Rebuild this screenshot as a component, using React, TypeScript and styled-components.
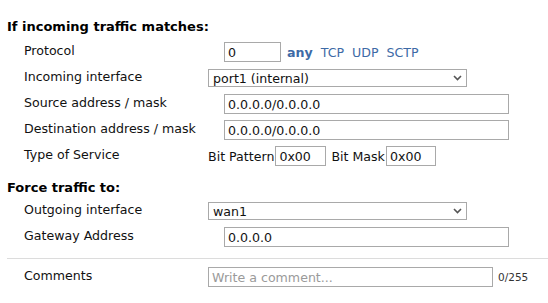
import React, { FC } from 'react';
import styled, { createGlobalStyle } from 'styled-components';

const GlobalStyle = createGlobalStyle`
	html, body {
		margin: 0;
		padding: 0;
		background: #ffffff;
	}
	body {
		font-family: 'DejaVu Sans', Verdana, sans-serif;
		font-size: 12.6px;
		color: #111111;
	}
`;

const Page = styled.div`
	width: 548px;
	height: 303px;
	overflow: hidden;
	padding-left: 7px;
	box-sizing: border-box;
`;

const SectionTitle = styled.div<{ $top: number; $bottom: number }>`
	margin-top: ${({ $top }) => $top}px;
	margin-bottom: ${({ $bottom }) => $bottom}px;
	font-weight: bold;
	font-size: 13px;
	line-height: 16px;
	color: #000000;
`;

const FieldRow = styled.div`
	display: grid;
	grid-template-columns: 184px 1fr;
	align-items: center;
	height: 26px;
	padding-left: 17px;
`;

const Label = styled.div`
	white-space: nowrap;
	padding-bottom: 4px;
`;

const Field = styled.div`
	display: flex;
	align-items: center;
	white-space: nowrap;
`;

const TextInput = styled.input<{ $width: number; $indent?: number }>`
	box-sizing: border-box;
	width: ${({ $width }) => $width}px;
	height: 20px;
	margin: 0 0 0 ${({ $indent }) => $indent ?? 16}px;
	padding: 0 3px;
	border: 1px solid #a9a9a9;
	font-family: inherit;
	font-size: 12.6px;
	color: #111111;
	background: #ffffff;
	outline: none;
	&::placeholder {
		color: #9a9a9a;
	}
`;

const ProtoLink = styled.span<{ $bold?: boolean }>`
	margin-left: ${({ $bold }) => ($bold ? 6 : 8)}px;
	color: #3d6aa6;
	font-weight: ${({ $bold }) => ($bold ? 'bold' : 'normal')};
	cursor: pointer;
`;

const SelectBox = styled.div`
	position: relative;
	width: 259px;
	height: 18px;
`;

const NativeSelect = styled.select`
	appearance: none;
	box-sizing: border-box;
	width: 100%;
	height: 100%;
	padding: 0 0 0 4px;
	margin: 0;
	border: 1px solid #a9a9a9;
	border-radius: 0;
	background: #ffffff;
	font-family: inherit;
	font-size: 12.6px;
	color: #111111;
	outline: none;
`;

const Chevron = styled.svg`
	position: absolute;
	right: 5px;
	top: 6px;
	pointer-events: none;
`;

const InlineText = styled.span<{ $gap?: number }>`
	margin-left: ${({ $gap }) => $gap ?? 0}px;
	margin-right: 1px;
`;

const Divider = styled.div`
	margin-top: 8px;
	height: 1px;
	background: #dcdcdc;
`;

const Counter = styled.span`
	margin-left: 5px;
	font-size: 10.5px;
	color: #333333;
`;

const CommentRow = styled(FieldRow)`
	margin-top: 5px;
`;

const Select: FC<{ value: string }> = ({ value }) => (
	<SelectBox>
		<NativeSelect defaultValue={value}>
			<option value={value}>{value}</option>
		</NativeSelect>
		<Chevron width="9" height="6" viewBox="0 0 9 6">
			<path d="M1 1 L4.5 4.5 L8 1" fill="none" stroke="#555555" strokeWidth="1.6" />
		</Chevron>
	</SelectBox>
);

export default function App() {
	return (
		<Page>
			<GlobalStyle />
			<SectionTitle $top={19} $bottom={4}>If incoming traffic matches:</SectionTitle>
			<FieldRow>
				<Label>Protocol</Label>
				<Field>
					<TextInput $width={57} defaultValue="0" />
					<ProtoLink $bold>any</ProtoLink>
					<ProtoLink>TCP</ProtoLink>
					<ProtoLink>UDP</ProtoLink>
					<ProtoLink>SCTP</ProtoLink>
				</Field>
			</FieldRow>
			<FieldRow>
				<Label>Incoming interface</Label>
				<Field>
					<Select value="port1 (internal)" />
				</Field>
			</FieldRow>
			<FieldRow>
				<Label>Source address / mask</Label>
				<Field>
					<TextInput $width={285} defaultValue="0.0.0.0/0.0.0.0" />
				</Field>
			</FieldRow>
			<FieldRow>
				<Label>Destination address / mask</Label>
				<Field>
					<TextInput $width={285} defaultValue="0.0.0.0/0.0.0.0" />
				</Field>
			</FieldRow>
			<FieldRow>
				<Label>Type of Service</Label>
				<Field>
					<InlineText>Bit Pattern</InlineText>
					<TextInput $width={51} $indent={0} defaultValue="0x00" />
					<InlineText $gap={5}>Bit Mask</InlineText>
					<TextInput $width={50} $indent={0} defaultValue="0x00" />
				</Field>
			</FieldRow>
			<SectionTitle $top={11} $bottom={2}>Force traffic to:</SectionTitle>
			<FieldRow>
				<Label>Outgoing interface</Label>
				<Field>
					<Select value="wan1" />
				</Field>
			</FieldRow>
			<FieldRow>
				<Label>Gateway Address</Label>
				<Field>
					<TextInput $width={285} defaultValue="0.0.0.0" />
				</Field>
			</FieldRow>
			<Divider />
			<CommentRow>
				<Label>Comments</Label>
				<Field>
					<TextInput $width={285} $indent={0} placeholder="Write a comment..." />
					<Counter>0/255</Counter>
				</Field>
			</CommentRow>
		</Page>
	);
}
